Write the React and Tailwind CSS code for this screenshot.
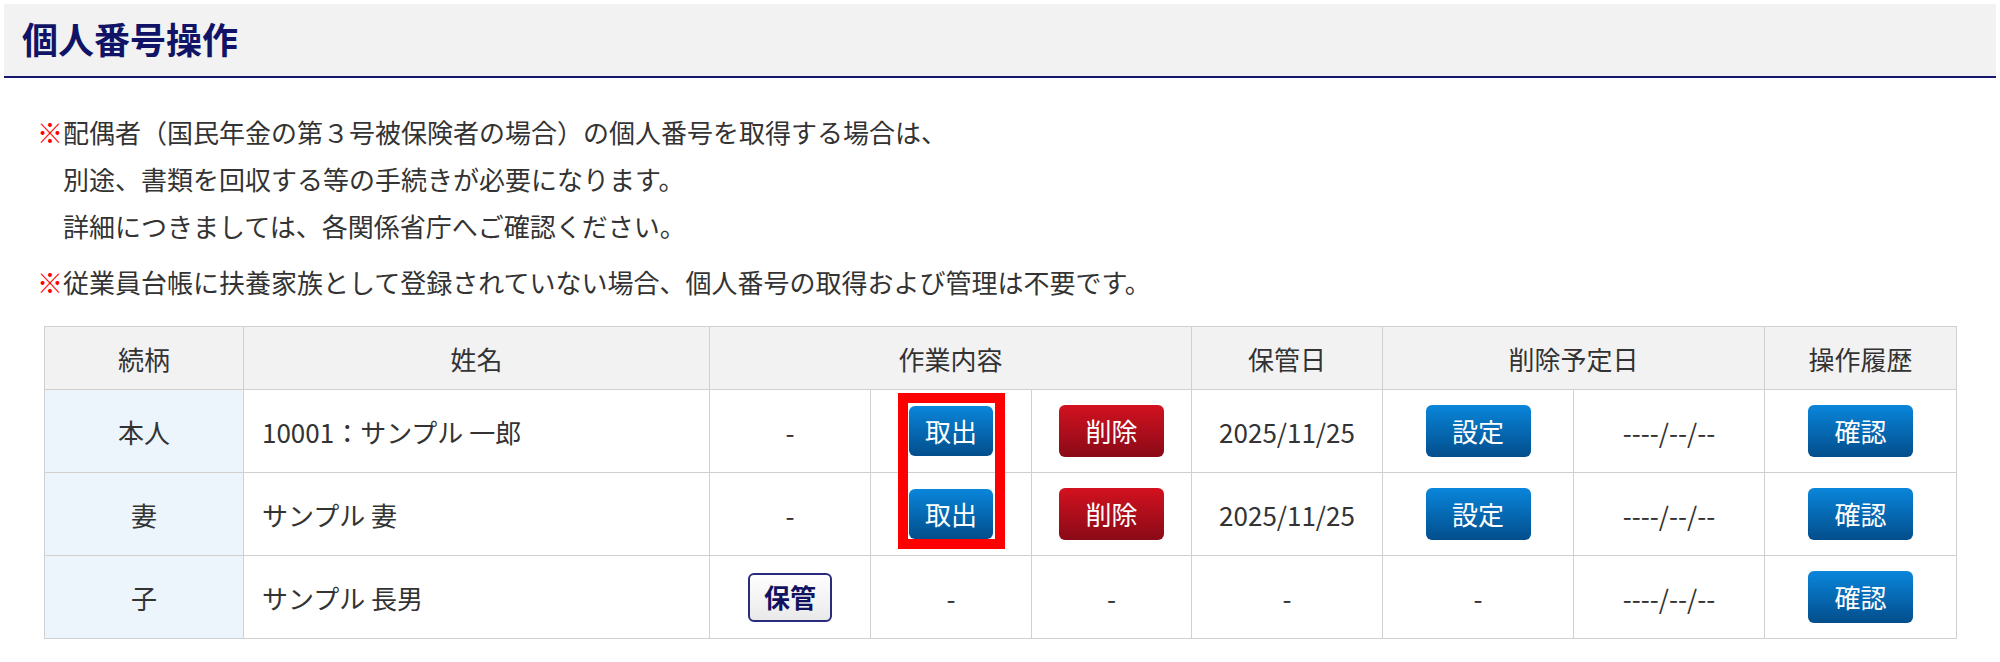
import React from "react";

const font = "font-['Noto_Sans_CJK_JP','Noto_Sans',sans-serif]";

function BlueBtn({ children, narrow }) {
  return (
    <span
      className={
        (narrow ? "w-[84px] h-[50px] " : "w-[105px] h-[52px] ") +
        "inline-flex items-center justify-center rounded-[6px] bg-linear-to-b from-[#0a86db] to-[#034e8c] text-white text-[26px] leading-none align-middle"
      }
    >
      {children}
    </span>
  );
}

function RedBtn({ children }) {
  return (
    <span className="inline-flex items-center justify-center w-[105px] h-[52px] rounded-[6px] bg-linear-to-b from-[#d3111f] to-[#8a0a17] text-white text-[26px] leading-none align-middle">
      {children}
    </span>
  );
}

function StoreBtn({ children }) {
  return (
    <span className="inline-flex items-center justify-center w-[84px] h-[49px] rounded-[6px] border-2 border-[#2b2b7d] bg-linear-to-b from-white to-[#e9e9e9] text-[#12125f] font-bold text-[26px] leading-none align-middle">
      {children}
    </span>
  );
}

const th = "bg-[#f2f2f2] border border-[#d0d0d0] font-normal text-center text-[#333]";
const td = "border border-[#d0d0d0] text-center text-[#333]";
const tdRel = "border border-[#d0d0d0] text-center text-[#333] bg-[#edf5fc]";
const tdName = "border border-[#d0d0d0] text-left pl-[18px] text-[#333]";

export default function App() {
  const rows = [
    { rel: "本人", name: "10001：サンプル 一郎", a: "-", b: <BlueBtn narrow>取出</BlueBtn>, c: <RedBtn>削除</RedBtn>, date: "2025/11/25", d: <BlueBtn>設定</BlueBtn> },
    { rel: "妻", name: "サンプル 妻", a: "-", b: <BlueBtn narrow>取出</BlueBtn>, c: <RedBtn>削除</RedBtn>, date: "2025/11/25", d: <BlueBtn>設定</BlueBtn> },
    { rel: "子", name: "サンプル 長男", a: <StoreBtn>保管</StoreBtn>, b: "-", c: "-", date: "-", d: "-" },
  ];
  return (
    <div className={"bg-white p-[4px] pb-[20px] text-[#333] " + font}>
      <div className="h-[74px] bg-[#f2f2f2] border-b-2 border-[#17186b] flex items-center pl-[18px] pb-[4px]">
        <h1 className="text-[36px] font-bold text-[#111466] leading-none">個人番号操作</h1>
      </div>

      <div className="mt-[30px] ml-[33px] text-[26px] leading-[47px]">
        <p>
          <span className="text-[#ff0000]">※</span>配偶者（国民年金の第３号被保険者の場合）の個人番号を取得する場合は、
        </p>
        <p className="pl-[26px]">別途、書類を回収する等の手続きが必要になります。</p>
        <p className="pl-[26px]">詳細につきましては、各関係省庁へご確認ください。</p>
        <p className="mt-[9px]">
          <span className="text-[#ff0000]">※</span>従業員台帳に扶養家族として登録されていない場合、個人番号の取得および管理は不要です。
        </p>
      </div>

      <div className="relative mt-[21px] mx-[40px]">
        <table className="w-full table-fixed border-collapse text-[26px]">
          <colgroup>
            <col className="w-[199px]" />
            <col className="w-[466px]" />
            <col className="w-[161px]" />
            <col className="w-[161px]" />
            <col className="w-[160px]" />
            <col className="w-[191px]" />
            <col className="w-[191px]" />
            <col className="w-[191px]" />
            <col className="w-[192px]" />
          </colgroup>
          <thead>
            <tr className="h-[63px]">
              <th className={th}>続柄</th>
              <th className={th}>姓名</th>
              <th className={th} colSpan={3}>作業内容</th>
              <th className={th}>保管日</th>
              <th className={th} colSpan={2}>削除予定日</th>
              <th className={th}>操作履歴</th>
            </tr>
          </thead>
          <tbody>
            {rows.map((r, i) => (
              <tr key={i} className="h-[83px]">
                <td className={tdRel}>{r.rel}</td>
                <td className={tdName}>{r.name}</td>
                <td className={td}>{r.a}</td>
                <td className={td}>{r.b}</td>
                <td className={td}>{r.c}</td>
                <td className={td}>{r.date}</td>
                <td className={td}>{r.d}</td>
                <td className={td}>----/--/--</td>
                <td className={td}>
                  <BlueBtn>確認</BlueBtn>
                </td>
              </tr>
            ))}
          </tbody>
        </table>
        <div className="absolute left-[854px] top-[67px] w-[107px] h-[156px] border-[10px] border-[#ff0000] pointer-events-none" />
      </div>
    </div>
  );
}
